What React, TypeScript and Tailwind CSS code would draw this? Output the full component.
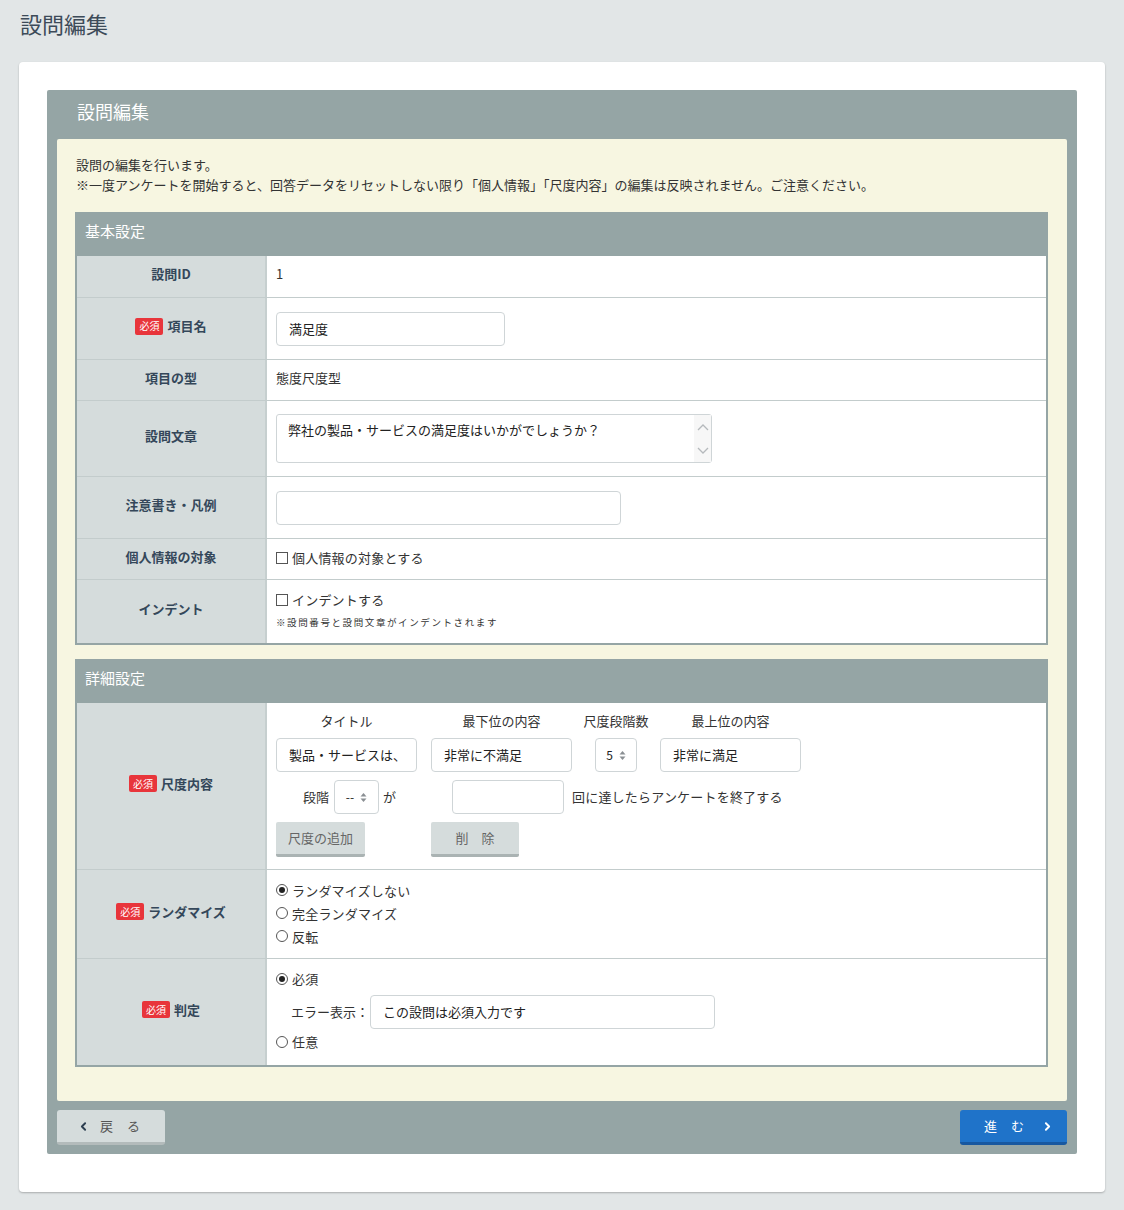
import React from "react";
import { ChevronLeft, ChevronRight } from "lucide-react";

const Badge = () => (
  <span className="inline-flex items-center justify-center w-[28px] h-[17px] rounded-[2px] bg-[#e8353b] text-white text-[10px] font-normal leading-none mr-[4px]">
    必須
  </span>
);

function Row({
  label,
  req,
  h,
  first,
  children,
  valueClass,
}: {
  label: string;
  req?: boolean;
  h: string;
  first?: boolean;
  children?: React.ReactNode;
  valueClass?: string;
}) {
  return (
    <div className={`flex ${h} ${first ? "" : "border-t border-[#c3cccc]"}`}>
      <div className="w-[190px] shrink-0 bg-[#d5dcdc] border-r-2 border-[#c6cfcf] flex items-center justify-center pb-[5px] text-[13px] font-bold text-[#34475a]">
        {req && <Badge />}
        {label}
      </div>
      <div className={`flex-1 bg-white pl-[9px] text-[13px] text-[#333] ${valueClass ?? "flex items-center"}`}>
        {children}
      </div>
    </div>
  );
}

function Input({ w, value, className }: { w: string; value?: string; className?: string }) {
  return (
    <div
      className={`h-[34px] border border-[#cfd5d7] rounded-[4px] bg-white flex items-center pl-[12px] text-[13px] text-[#222] ${w} ${className ?? ""}`}
    >
      {value}
    </div>
  );
}

function Spin() {
  return (
    <svg width="7" height="11" viewBox="0 0 7 11" className="ml-[6px]">
      <path d="M3.5 1 L6.5 4.5 L0.5 4.5 Z" fill="#8a8f93" />
      <path d="M3.5 10 L6.5 6.5 L0.5 6.5 Z" fill="#8a8f93" />
    </svg>
  );
}

function Select({ w, value, className }: { w: string; value: string; className?: string }) {
  return (
    <div
      className={`h-[34px] border border-[#cfd5d7] rounded-[4px] bg-white flex items-center justify-center text-[12px] text-[#222] ${w} ${className ?? ""}`}
    >
      <span>{value}</span>
      <Spin />
    </div>
  );
}

function Check({ label }: { label: string }) {
  return (
    <div className="flex items-center leading-[20px]">
      <span className="w-[12px] h-[12px] border border-[#555] bg-white mr-[4px]" />
      <span className="tracking-[0.2px]">{label}</span>
    </div>
  );
}

function Radio({ label, on }: { label: string; on?: boolean }) {
  return (
    <div className="flex items-center leading-[23px]">
      <span className="w-[12px] h-[12px] rounded-full border border-[#555] bg-white mr-[4px] flex items-center justify-center">
        {on && <span className="w-[6px] h-[6px] rounded-full bg-[#222]" />}
      </span>
      <span className="tracking-[0.2px]">{label}</span>
    </div>
  );
}

function TableHeader({ title }: { title: string }) {
  return (
    <div className="h-[42px] bg-[#95a5a5] pl-[8px] pt-[7px] text-[15px] leading-[20px] text-white">{title}</div>
  );
}

export default function App() {
  return (
    <div className="min-h-[1210px] bg-[#e2e6e7] font-['Noto_Sans_CJK_JP','Noto_Sans',sans-serif] text-[#333]">
      <div className="h-[62px] pl-[20px] pt-[8px]">
        <h1 className="text-[22px] leading-[30px] text-[#3d4b59]">設問編集</h1>
      </div>

      <div className="mx-[19px] bg-white rounded-[4px] shadow-[0_1px_2px_rgba(0,0,0,0.25)] px-[28px] pt-[28px] pb-[38px]">
        <div className="bg-[#95a5a5] rounded-[2px]">
          <div className="h-[49px] pl-[30px] pb-[6px] flex items-center text-white text-[18px]">設問編集</div>

          <div className="mx-[10px] bg-[#f7f6e1] rounded-[2px] pl-[18px] pr-[19px] pt-[16px] pb-[34px]">
            <div className="pl-[1px] text-[13px] leading-[20px] text-[#333]">
              <p>設問の編集を行います。</p>
              <p>
                ※一度アンケートを開始すると、回答データをリセットしない限り「個人情報」「尺度内容」の編集は反映されません。ご注意ください。
              </p>
            </div>

            {/* 基本設定 */}
            <div className="mt-[17px] border-2 border-[#95a5a5]">
              <TableHeader title="基本設定" />
              <Row label="設問ID" h="h-[41px]" first valueClass="flex items-center pb-[5px]">
                1
              </Row>
              <Row label="項目名" req h="h-[62px]">
                <Input w="w-[229px]" value="満足度" />
              </Row>
              <Row label="項目の型" h="h-[41px]" valueClass="flex items-center pb-[5px]">
                態度尺度型
              </Row>
              <Row label="設問文章" h="h-[76px]">
                <div className="relative w-[436px] h-[49px] border border-[#cfd5d7] rounded-[3px] bg-white pl-[11px] pt-[5px] text-[13px] text-[#222]">
                  弊社の製品・サービスの満足度はいかがでしょうか？
                  <div className="absolute right-0 top-0 bottom-0 w-[17px] bg-[#f7f7f7] flex flex-col items-center justify-between pt-[9px] pb-[8px]">
                    <svg width="12" height="7" viewBox="0 0 12 7">
                      <path d="M1 6 L6 1 L11 6" stroke="#b5b9bc" strokeWidth="1.3" fill="none" />
                    </svg>
                    <svg width="12" height="7" viewBox="0 0 12 7">
                      <path d="M1 1 L6 6 L11 1" stroke="#b5b9bc" strokeWidth="1.3" fill="none" />
                    </svg>
                  </div>
                </div>
              </Row>
              <Row label="注意書き・凡例" h="h-[62px]">
                <Input w="w-[345px]" />
              </Row>
              <Row label="個人情報の対象" h="h-[41px]" valueClass="flex items-center pb-[3px]">
                <Check label="個人情報の対象とする" />
              </Row>
              <Row label="インデント" h="h-[64px]" valueClass="pt-[10px]">
                <Check label="インデントする" />
                <div className="mt-[5px] text-[9.5px] tracking-[1.6px] leading-[14px] text-[#333]">
                  ※設問番号と設問文章がインデントされます
                </div>
              </Row>
            </div>

            {/* 詳細設定 */}
            <div className="mt-[14px] border-2 border-[#95a5a5]">
              <TableHeader title="詳細設定" />
              <Row label="尺度内容" req h="h-[166px]" first valueClass="pt-[8px]">
                <div className="flex text-[13px] leading-[20px] text-[#333]">
                  <div className="w-[141px] text-center">タイトル</div>
                  <div className="w-[141px] ml-[14px] text-center">最下位の内容</div>
                  <div className="w-[42px] ml-[23px] flex justify-center whitespace-nowrap">尺度段階数</div>
                  <div className="w-[141px] ml-[23px] text-center">最上位の内容</div>
                </div>
                <div className="flex mt-[7px]">
                  <Input w="w-[141px]" value="製品・サービスは、" />
                  <Input w="w-[141px]" value="非常に不満足" className="ml-[14px]" />
                  <Select w="w-[42px]" value="5" className="ml-[23px]" />
                  <Input w="w-[141px]" value="非常に満足" className="ml-[23px]" />
                </div>
                <div className="flex items-center mt-[8px]">
                  <div className="w-[176px] flex items-center">
                    <span className="ml-[27px]">段階</span>
                    <Select w="w-[45px]" value="--" className="ml-[5px]" />
                    <span className="ml-[4px]">が</span>
                  </div>
                  <Input w="w-[112px]" />
                  <span className="ml-[8px] tracking-[0.2px]">回に達したらアンケートを終了する</span>
                </div>
                <div className="flex mt-[8px]">
                  <div className="w-[89px] h-[35px] bg-[#d5dcdc] border-b-[3px] border-[#aab3b3] rounded-[2px] flex items-center justify-center text-[13px] text-[#666]">
                    尺度の追加
                  </div>
                  <div className="w-[88px] ml-[66px] h-[35px] bg-[#d5dcdc] border-b-[3px] border-[#aab3b3] rounded-[2px] flex items-center justify-center text-[13px] text-[#666]">
                    削　除
                  </div>
                </div>
              </Row>
              <Row label="ランダマイズ" req h="h-[89px]" valueClass="flex flex-col justify-center pb-[2px]">
                <Radio label="ランダマイズしない" on />
                <Radio label="完全ランダマイズ" />
                <Radio label="反転" />
              </Row>
              <Row label="判定" req h="h-[107px]" valueClass="pt-[8px]">
                <Radio label="必須" on />
                <div className="flex items-center mt-[5px]">
                  <span className="ml-[15px] w-[79px] whitespace-nowrap">エラー表示：</span>
                  <Input w="w-[345px]" value="この設問は必須入力です" />
                </div>
                <div className="mt-[1px]">
                  <Radio label="任意" />
                </div>
              </Row>
            </div>
          </div>

          <div className="flex justify-between px-[10px] py-[9px]">
            <div className="w-[108px] h-[35px] bg-[#d5dcdc] border-b-[3px] border-[#b3bbbb] rounded-[3px] flex items-center pl-[20px] text-[13px] text-[#555]">
              <ChevronLeft size={13} strokeWidth={3.5} className="text-[#2c3e50]" />
              <span className="ml-[10px] tracking-[0.5px]">戻　る</span>
            </div>
            <div className="w-[107px] h-[35px] bg-[#1f73c9] border-b-[3px] border-[#1858a0] rounded-[3px] flex items-center pl-[24px] text-[13px] text-white">
              <span className="tracking-[0.5px]">進　む</span>
              <ChevronRight size={13} strokeWidth={3.5} className="ml-[16px] text-white" />
            </div>
          </div>
        </div>
      </div>
    </div>
  );
}
